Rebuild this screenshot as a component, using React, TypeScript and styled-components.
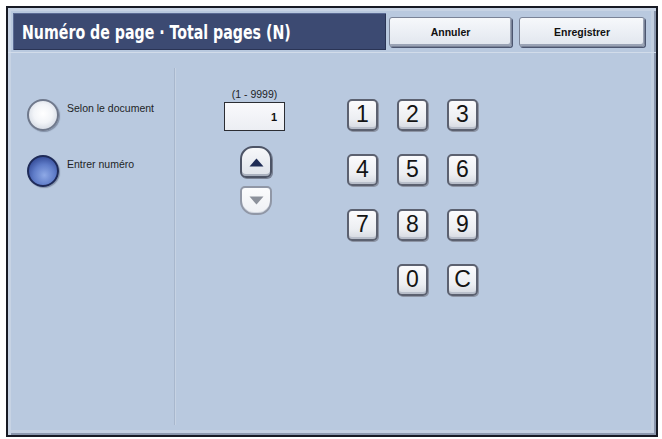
import React from "react";
import styled, {createGlobalStyle} from "styled-components";

const GlobalStyle = createGlobalStyle`
    html, body {
        margin: 0;
        padding: 0;
        background: #ffffff;
    }
    body {
        font-family: "Liberation Sans", Arial, sans-serif;
    }
`

const Frame = styled.div`
    box-sizing: border-box;
    width: 652px;
    height: 431px;
    margin: 6px 0 0 6px;
    border: 2px solid #171a24;
    background: #b9c9df;
    box-shadow: inset 3px 3px 0 #c7d3e4, inset -2px -2px 0 #8b97ad, inset -5px -5px 0 #c3cfe0;
    display: flex;
    flex-direction: column;
`

const Header = styled.div`
    box-sizing: border-box;
    height: 45px;
    padding: 5px 0 0 5px;
    display: flex;
    align-items: flex-start;
    border-bottom: 1px solid #d2dcea;
`

const TitleBar = styled.div`
    box-sizing: border-box;
    width: 373px;
    height: 37px;
    padding-left: 9px;
    display: flex;
    align-items: center;
    background: #3c4a72;
    box-shadow: inset 1px 1px 0 #5b6b95, inset -1px -1px 0 #2a3455;
    overflow: hidden;
`

// the screen font is a condensed bold face; DejaVu Condensed squeezed a little more
const Title = styled.h1`
    margin: 0;
    color: #ffffff;
    font-family: "DejaVu Sans Condensed", "Liberation Sans", sans-serif;
    font-stretch: condensed;
    font-weight: 700;
    font-size: 19px;
    white-space: nowrap;
    transform: scaleX(0.83);
    transform-origin: left center;
`

const HeaderButton = styled.button<{ $width: number; $gap: number }>`
    box-sizing: border-box;
    width: ${p => p.$width}px;
    height: 30px;
    margin: 4px 0 0 ${p => p.$gap}px;
    border: 1px solid #7a8397;
    border-radius: 3px;
    background: linear-gradient(#f6f8fb, #e1e6ee);
    box-shadow: inset -1px -2px 0 #9aa3b5, 1px 1px 0 #4c5670;
    font-family: "Liberation Sans", Arial, sans-serif;
    font-weight: 700;
    font-size: 10.5px;
    color: #111;
    padding: 0;
`

const Body = styled.div`
    flex: 1;
    display: flex;
    align-items: flex-start;
`

const LeftPanel = styled.div`
    box-sizing: border-box;
    width: 166px;
    padding: 46px 0 0 19px;
    display: flex;
    flex-direction: column;
    gap: 24px;
`

const RadioRow = styled.div`
    display: flex;
    align-items: flex-start;
    gap: 8px;
`

const RadioDot = styled.div<{ $on?: boolean }>`
    box-sizing: border-box;
    width: 32px;
    height: 32px;
    border-radius: 50%;
    border: 2px solid ${p => p.$on ? "#1e2a58" : "#6f788b"};
    background: ${p => p.$on
        ? "radial-gradient(circle at 55% 65%, #8ea9e6 0%, #5f7cc8 45%, #334a96 80%, #223370 100%)"
        : "radial-gradient(circle at 50% 45%, #ffffff 0%, #f2f4f8 45%, #d3d9e3 80%, #a9b1c0 100%)"};
    box-shadow: 1px 1px 1px rgba(60, 70, 95, 0.45);
`

const RadioLabel = styled.span`
    margin-top: 3px;
    font-size: 10.5px;
    line-height: 13px;
    color: #1d1f26;
    white-space: nowrap;
`

const Divider = styled.div`
    align-self: stretch;
    width: 1px;
    margin: 15px 0 10px;
    background: #a8b7cd;
    box-shadow: 1px 0 0 #c6d2e3;
`

const Counter = styled.div`
    width: 61px;
    margin: 35px 0 0 49px;
    display: flex;
    flex-direction: column;
    align-items: center;
`

const RangeLabel = styled.span`
    font-size: 10.5px;
    line-height: 13px;
    color: #1d1f26;
    white-space: nowrap;
`

const ValueBox = styled.div`
    box-sizing: border-box;
    width: 61px;
    height: 29px;
    margin-top: 1px;
    padding-right: 7px;
    border: 1px solid #2b2d33;
    background: linear-gradient(#f9f9fc, #eceef3);
    display: flex;
    align-items: center;
    justify-content: flex-end;
    font-weight: 700;
    font-size: 11px;
    color: #111;
`

const StepButton = styled.div<{ $dir: "up" | "down" }>`
    box-sizing: border-box;
    width: 32px;
    height: ${p => p.$dir === "up" ? 32 : 29}px;
    margin: ${p => p.$dir === "up" ? "15px 0 0 3px" : "8px 0 0 3px"};
    border: 2px solid ${p => p.$dir === "up" ? "#4d5466" : "#9097a6"};
    border-radius: ${p => p.$dir === "up" ? "13px 13px 6px 6px" : "5px 5px 14px 14px"};
    background: ${p => p.$dir === "up"
        ? "linear-gradient(#f7f8fa, #dfe3ea)"
        : "linear-gradient(#fbfcfd, #eef0f4)"};
    box-shadow: ${p => p.$dir === "up"
        ? "inset 0 -2px 0 #a9b0be, 1px 1px 0 #7b8395"
        : "inset 0 -1px 0 #d2d7e0"};
    display: flex;
    align-items: center;
    justify-content: center;
`

const Keypad = styled.div`
    margin: 46px 0 0 62px;
    display: grid;
    grid-template-columns: repeat(3, 31px);
    grid-auto-rows: 32px;
    column-gap: 19px;
    row-gap: 23px;
`

const Key = styled.button<{ $col?: number }>`
    box-sizing: border-box;
    grid-column: ${p => p.$col ?? "auto"};
    width: 31px;
    height: 32px;
    padding: 0 0 2px;
    border: 2px solid #5c6170;
    border-radius: 5px;
    background: linear-gradient(#fbfbfd 0%, #eceef2 65%, #d4d8e0 100%);
    box-shadow: inset 0 -2px 0 #b9bfcb, 1px 1px 0 #8d94a4;
    font-family: "Liberation Sans", Arial, sans-serif;
    font-size: 23px;
    line-height: 1;
    color: #141414;
`

function Arrow({dir}: { dir: "up" | "down" }) {
    const up = dir === "up";
    return (
        <svg width="15" height="9" viewBox="0 0 15 9">
            <polygon
                points={up ? "7.5,0.5 14.5,8.5 0.5,8.5" : "0.5,0.5 14.5,0.5 7.5,8.5"}
                fill={up ? "#1f2c55" : "#8c919b"}
            />
        </svg>
    );
}

const keys = ["1", "2", "3", "4", "5", "6", "7", "8", "9"];

export default function App() {
    return (
        <>
            <GlobalStyle/>
            <Frame>
                <Header>
                    <TitleBar>
                        <Title>Numéro de page · Total pages (N)</Title>
                    </TitleBar>
                    <HeaderButton $width={123} $gap={3}>Annuler</HeaderButton>
                    <HeaderButton $width={126} $gap={7}>Enregistrer</HeaderButton>
                </Header>

                <Body>
                    <LeftPanel>
                        <RadioRow>
                            <RadioDot/>
                            <RadioLabel>Selon le document</RadioLabel>
                        </RadioRow>
                        <RadioRow>
                            <RadioDot $on/>
                            <RadioLabel>Entrer numéro</RadioLabel>
                        </RadioRow>
                    </LeftPanel>

                    <Divider/>

                    <Counter>
                        <RangeLabel>(1 - 9999)</RangeLabel>
                        <ValueBox>1</ValueBox>
                        <StepButton $dir="up"><Arrow dir="up"/></StepButton>
                        <StepButton $dir="down"><Arrow dir="down"/></StepButton>
                    </Counter>

                    <Keypad>
                        {keys.map(k => <Key key={k}>{k}</Key>)}
                        <Key $col={2}>0</Key>
                        <Key>C</Key>
                    </Keypad>
                </Body>
            </Frame>
        </>
    );
}
